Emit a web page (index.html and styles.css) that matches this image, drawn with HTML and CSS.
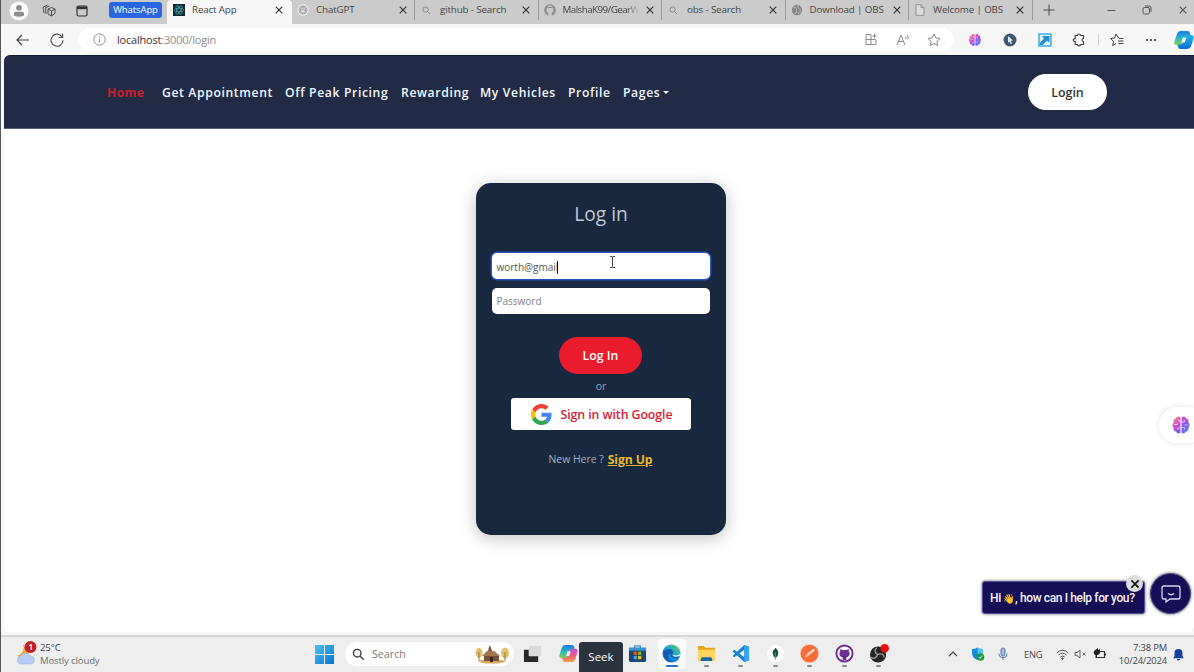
FILE: index.html
```html
<!DOCTYPE html>
<html lang="en">
<head>
<meta charset="utf-8">
<title>React App</title>
<link rel="stylesheet" href="styles.css">
</head>
<body>
<svg class="defs" width="0" height="0">
  <defs>
    <linearGradient id="gBrain" x1="0" y1="0" x2="1" y2="1"><stop offset="0" stop-color="#ff9a4a"/><stop offset=".35" stop-color="#d64fd0"/><stop offset=".65" stop-color="#7b55ee"/><stop offset="1" stop-color="#3f9bff"/></linearGradient>
    <linearGradient id="gWin" x1="0" y1="0" x2="1" y2="1"><stop offset="0" stop-color="#4cc3f3"/><stop offset="1" stop-color="#0873cf"/></linearGradient>
    <linearGradient id="gEdge" x1="0" y1="1" x2="1" y2="0"><stop offset="0" stop-color="#0d60b8"/><stop offset=".5" stop-color="#1b9fd8"/><stop offset="1" stop-color="#62d65c"/></linearGradient>
    <linearGradient id="gCop" x1="0" y1="0" x2="0" y2="1"><stop offset="0" stop-color="#1a7bea"/><stop offset=".5" stop-color="#25b9c4"/><stop offset="1" stop-color="#8ed04a"/></linearGradient>
    <linearGradient id="gCop2" x1="0" y1="0" x2="0" y2="1"><stop offset="0" stop-color="#b45be0"/><stop offset=".5" stop-color="#f0578b"/><stop offset="1" stop-color="#f8a13c"/></linearGradient>
    <linearGradient id="gCop3" x1="0" y1="0" x2="0" y2="1"><stop offset="0" stop-color="#22b8e8"/><stop offset="1" stop-color="#0b6bd8"/></linearGradient>
    <symbol id="close" viewBox="0 0 10 10"><path d="M1.700 1.700l6.600 6.600M8.300 1.700L1.700 8.300" stroke="currentColor" stroke-width="1.200" fill="none"/></symbol>
    <symbol id="search" viewBox="0 0 12 12"><circle cx="4.800" cy="4.800" r="3.500" fill="none" stroke="currentColor" stroke-width="1.200"/><path d="M7.400 7.400l3.400 3.400" stroke="currentColor" stroke-width="1.200" fill="none"/></symbol>
    <symbol id="brain" viewBox="0 0 20 20"><path d="M9.400 2.200C7.500.8 5.200 1.700 4.900 3.600 2.800 3.900 1.900 6 2.700 7.500 1 8.800 1 11.300 2.500 12.400c-.5 2.200.8 3.900 2.600 4.100.7 2 3.100 2.400 4.300 1.200zM10.600 2.200c1.900-1.400 4.200-.5 4.500 1.400 2.100.3 3 2.400 2.200 3.900 1.700 1.300 1.700 3.800.2 4.900.5 2.200-.8 3.900-2.600 4.100-.7 2-3.100 2.400-4.300 1.200z" fill="url(#gBrain)"/><path d="M9.400 6H7.200V4.500M9.400 13H6.800v2M2.800 9.500h3.600V8M10.600 7h2.700V5M10.600 12.500h3v2M17 10h-3.600" stroke="#fff" stroke-width=".9" fill="none" opacity=".7"/></symbol>
  </defs>
</svg>
<div class="screen">
  <header class="tabstrip">
    <div class="strip-tools">
      <svg class="avatar" viewBox="0 0 20 20"><circle cx="10" cy="10" r="9.500" fill="#fbfbfb"/><circle cx="10" cy="6.800" r="2.900" fill="#8d8d8d"/><path d="M5 14.500v-2.300q0-1.500 1.500-1.500h7q1.500 0 1.500 1.500v2.300q-5 2.500-10 0z" fill="#8d8d8d"/></svg>
      <svg width="14" height="14" viewBox="0 0 14 14" fill="none" stroke="#4b4b4b"><path d="M6 5l3.500-1.500L13 5v4.500L9.500 12 6 10zM6 5l3.500 2L13 5M9.500 7v5M4 10L3.500 3.500 7.500 2M2 9L1 3.200 5.500 1"/></svg>
      <svg width="12" height="12" viewBox="0 0 12 12"><rect x="1" y="1" width="10" height="10" rx="1.500" fill="none" stroke="#333" stroke-width="1.200"/><path d="M1 1.500h10v2.700H1z" fill="#333"/></svg>
      <span class="group-pill">WhatsApp</span>
    </div>
    <div class="tab active"><svg class="fav" viewBox="0 0 12 12"><rect width="12" height="12" fill="#10282c"/><g fill="none" stroke="#3f9fa8" stroke-width=".8"><ellipse cx="6" cy="6" rx="4.800" ry="1.900"/><ellipse cx="6" cy="6" rx="4.800" ry="1.900" transform="rotate(60 6 6)"/><ellipse cx="6" cy="6" rx="4.800" ry="1.900" transform="rotate(120 6 6)"/></g></svg><span class="title">React App</span><svg class="x"><use href="#close"/></svg></div>
    <div class="tab first"><svg class="fav" viewBox="0 0 12 12"><circle cx="6" cy="6" r="6" fill="#e2e2e2"/><g fill="none" stroke="#999" stroke-width=".8"><circle cx="6" cy="6" r="4"/><path d="M3.500 4.500L6 3l2.500 1.500v3L6 9 3.500 7.500zM6 2v3l3 2M3 7l3-2"/></g></svg><span class="title">ChatGPT</span><svg class="x"><use href="#close"/></svg></div>
    <div class="tab"><svg class="fav small"><use href="#search"/></svg><span class="title">github - Search</span><svg class="x"><use href="#close"/></svg></div>
    <div class="tab"><svg class="fav" viewBox="0 0 12 12"><path d="M3.700 10.800A5.200 5.200 0 1 1 8.300 10.800V8.900q1.900-.6 1.900-2.700 0-1-.6-1.600V2.900L8 3.500H4l-1.600-.6v1.700q-.6.600-.6 1.600 0 2.100 1.900 2.700z" fill="none" stroke="#8c8c8c" stroke-width="1.200"/></svg><span class="title fade">MalshaK99/GearW</span><svg class="x"><use href="#close"/></svg></div>
    <div class="tab"><svg class="fav small"><use href="#search"/></svg><span class="title">obs - Search</span><svg class="x"><use href="#close"/></svg></div>
    <div class="tab"><svg class="fav" viewBox="0 0 12 12"><circle cx="6" cy="6" r="5.200" fill="#888"/><path d="M2 3l3 1 1 3-2 3M7 1v3l3 2M7 10l1-2 3 0" fill="none" stroke="#b0b0b0"/></svg><span class="title">Download | OBS</span><svg class="x"><use href="#close"/></svg></div>
    <div class="tab"><svg class="fav" viewBox="0 0 12 12"><path d="M2 .7h5l3 3v7.600H2zM7 .7v3h3" fill="#ddd" stroke="#909090"/></svg><span class="title">Welcome | OBS</span><svg class="x"><use href="#close"/></svg></div>
    <div class="window-tools">
      <svg width="12" height="12" viewBox="0 0 12 12"><path d="M6 .5v11M.5 6h11" stroke="#444"/></svg>
      <svg width="9" height="9" viewBox="0 0 9 9"><path d="M.5 4.500h8" stroke="#555"/></svg>
      <svg width="10" height="10" viewBox="0 0 10 10" fill="none" stroke="#555"><rect x="1" y="2.500" width="6.500" height="6.500" rx="1.500"/><path d="M3 1h4q2 0 2 2v4"/></svg>
      <svg width="10" height="10"><use href="#close"/></svg>
    </div>
  </header>

  <div class="toolbar">
    <svg width="14" height="12" viewBox="0 0 14 12" fill="none" stroke="#444" stroke-width="1.200"><path d="M13 6H1M6 1L1 6l5 5"/></svg>
    <svg width="14" height="14" viewBox="0 0 14 14" fill="none" stroke="#555" stroke-width="1.200"><path d="M12.200 4.200A6 6 0 1 0 13 7.300M12.600.8v3.700H8.800"/></svg>
    <div class="address">
      <svg width="13" height="13" viewBox="0 0 13 13" fill="none" stroke="#8d8d8d"><circle cx="6.500" cy="6.500" r="5.700"/><path d="M6.500 5.800v3.700M6.500 3.300v1.200"/></svg>
      <span class="url">localhost<i>:3000/login</i></span>
      <svg width="13" height="13" viewBox="0 0 13 13" fill="none" stroke="#8c8c8c"><path d="M6 1.500H1v10h10V7M1 6.500h10M6 1.500v10M9.500.8v4.400M7.300 3h4.400"/></svg>
      <svg class="read" width="15" height="13" viewBox="0 0 15 13" fill="none" stroke="#8c8c8c"><path d="M1 12L4.800 2.500h.4L9 12M2.500 8.500h5M9.500 3.500q1 1 .3 2.500M11 1.800q2 2 .8 4.700"/></svg>
      <svg width="14" height="14" viewBox="0 0 14 14" fill="none" stroke="#858585"><path d="M7 1l1.800 3.900 4.200.5-3.100 2.900.8 4.200L7 10.500l-3.700 2 .8-4.200L1 5.400l4.200-.5z"/></svg>
    </div>
    <svg width="14" height="14"><use href="#brain"/></svg>
    <svg width="14" height="14" viewBox="0 0 14 14"><circle cx="7" cy="7" r="6.500" fill="#45566e"/><path d="M5 3l5 4.500-2.200.3L9 10.500l-1.500.6-1-2.600L5 9.800z" fill="#dcebf8"/></svg>
    <svg width="14" height="14" viewBox="0 0 14 14"><rect x="1" y="1" width="12" height="12" fill="#dff2fc" stroke="#3caee5" stroke-width="1.500"/><path d="M2 12L2 10 6 5.500 4 3H11.500v6.500L9 7.800 4.500 12z" fill="#238fcf"/></svg>
    <svg width="14" height="14" viewBox="0 0 14 14" fill="none" stroke="#444" stroke-width="1.200"><path d="M4 2.500h1.500c0-2 3-2 3 0h3v3c-2 0-2 3 0 3v3h-3c0 1.700-3 1.700-3 0H3.200v-3C.7 8.700.7 5.500 3.200 5.600V2.500z"/></svg>
    <span class="bar-sep"></span>
    <svg width="14" height="14" viewBox="0 0 14 14" fill="none" stroke="#444"><path d="M8.500 5L6 1 4.500 5l-4 .5 3 2.800-.8 4.200L6 10.500M9 5.500h4.500M8 8h5.500M8.500 10.500h5"/></svg>
    <svg width="12" height="4" viewBox="0 0 12 4" fill="#333"><circle cx="2" cy="2" r="1.100"/><circle cx="6" cy="2" r="1.100"/><circle cx="10" cy="2" r="1.100"/></svg>
    <svg width="20" height="18" viewBox="0 0 20 18"><path d="M6.500 0h7q2 0 2.500 2l.6 2.500h-3q-2 0-2.600 2L9.300 12q-.6 2-2.600 2H3Q-.5 14 .5 10.500L3 2.800Q4 0 6.500 0z" fill="url(#gCop)"/><path d="M13.500 18h-7q-2 0-2.500-2l-.6-2.500h3q2 0 2.600-2L10.700 6q.6-2 2.600-2H17q3.500 0 2.500 3.500L17 15.200Q16 18 13.500 18z" fill="url(#gCop3)"/><path d="M8.800 6.500h3.400L10.800 11.500H7.400z" fill="#f7f7f8"/></svg>
  </div>

  <main class="page">
    <nav class="navbar">
      <a class="n-home">Home</a><a class="n-get">Get Appointment</a><a class="n-off">Off Peak Pricing</a><a class="n-rew">Rewarding</a><a class="n-veh">My Vehicles</a><a class="n-pro">Profile</a><a class="n-pag">Pages</a><span class="caret"></span>
      <button class="nav-login">Login</button>
    </nav>
    <form class="card">
      <h1>Log in</h1>
      <div class="field focus"><span>worth@gmail</span><b class="text-caret"></b></div>
      <div class="field"><span class="placeholder">Password</span></div>
      <div class="submit">Log In</div>
      <div class="or">or</div>
      <div class="google"><svg width="21" height="21" viewBox="0 0 48 48"><path fill="#ea4335" d="M24 9.500c3.500 0 6.700 1.200 9.200 3.600l6.900-6.900C35.900 2.400 30.500 0 24 0 14.600 0 6.500 5.400 2.600 13.200l8 6.200C12.400 13.700 17.700 9.500 24 9.500z"/><path fill="#4285f4" d="M47 24.500c0-1.600-.2-3.100-.4-4.500H24v9h12.900c-.6 3-2.300 5.500-4.800 7.200l7.700 6C44.400 38 47 31.800 47 24.500z"/><path fill="#fbbc05" d="M10.500 28.600a14.500 14.500 0 0 1 0-9.200l-8-6.200a24 24 0 0 0 0 21.600z"/><path fill="#34a853" d="M24 48c6.500 0 11.900-2.100 15.900-5.800l-7.700-6c-2.200 1.500-5 2.300-8.200 2.300-6.300 0-11.600-4.200-13.500-9.900l-8 6.200C6.500 42.600 14.600 48 24 48z"/></svg><span>Sign in with Google</span></div>
      <div class="signup"><span>New Here ?</span><a>Sign Up</a></div>
    </form>
  </main>

  <footer class="taskbar">
    <div class="weather">
      <svg width="24" height="26" viewBox="0 0 24 26"><path d="M8 3Q11 11 2 15q8 3 12-3z" fill="#f6a724"/><path d="M5 23a4.200 4.200 0 0 1 .5-8 5.500 5.500 0 0 1 9.500-.3A4.200 4.200 0 0 1 16 23z" fill="#b5cdf3" stroke="#92b1e3" stroke-width=".6"/><circle cx="15.500" cy="6" r="6" fill="#c01f22"/><text x="13.200" y="9.300" class="badge-num">1</text></svg>
      <div class="weather-text"><span>25°C</span><em>Mostly cloudy</em></div>
    </div>
    <svg class="start" viewBox="0 0 19 19" fill="url(#gWin)"><path d="M0 0h9v9H0zM10 0h9v9h-9zM0 10h9v9H0zM10 10h9v9h-9z"/></svg>
    <div class="searchbox">
      <svg width="13" height="13"><use href="#search"/></svg><span>Search</span>
      <svg width="34" height="20" viewBox="0 0 34 20"><ellipse cx="17" cy="17.500" rx="13" ry="2" fill="#d5ac55"/><ellipse cx="4" cy="9" rx="3.500" ry="5" fill="#e0c06b"/><ellipse cx="30" cy="9" rx="4" ry="5.500" fill="#e0c06b"/><path d="M4 8v9M30 8v9" stroke="#9b7439"/><path d="M9 11l4-4 1-4 1-2 1 3 1 3 7 4v6H9z" fill="#7a5137"/><path d="M7 12l5-5h7l6 5z" fill="#a17750"/><path d="M15 13h3v5h-3z" fill="#3b2721"/></svg>
    </div>
    <div class="apps">
      <div class="app"><svg viewBox="0 0 20 20"><path d="M6 2h13v11H6z" fill="#d9d9d9"/><path d="M1 6h5v7h10v6H1z" fill="#292929"/></svg></div>
      <div class="app"><svg viewBox="0 0 20 18"><path d="M6.500 0h7q2 0 2.500 2l.6 2.500h-3q-2 0-2.600 2L9.300 12q-.6 2-2.600 2H3Q-.5 14 .5 10.500L3 2.800Q4 0 6.500 0z" fill="url(#gCop)"/><path d="M13.500 18h-7q-2 0-2.500-2l-.6-2.500h3q2 0 2.600-2L10.700 6q.6-2 2.600-2H17q3.500 0 2.500 3.500L17 15.200Q16 18 13.500 18z" fill="url(#gCop2)"/><path d="M8.800 6.500h3.400L10.800 11.500H7.400z" fill="#eee"/></svg></div>
      <div class="app skip"><svg viewBox="0 0 20 20"><path d="M7 5V2h6v3" fill="none" stroke="#3f9de0" stroke-width="1.500"/><path d="M1 4h18v13q0 2-2 2H3q-2 0-2-2z" fill="#1d466f"/><path d="M1 4h18v3H1z" fill="#3b91d2"/><path d="M6 8h3.500v3.500H6z" fill="#f25022"/><path d="M10.500 8H14v3.500h-3.500z" fill="#7fba00"/><path d="M6 12.500h3.500V16H6z" fill="#36a7ed"/><path d="M10.500 12.500H14V16h-3.500z" fill="#ffb900"/></svg></div>
      <div class="app current"><svg viewBox="0 0 20 20"><circle cx="10" cy="10" r="9.500" fill="url(#gEdge)"/><path d="M1 9c3-5 10-5 11-.5.300 1.500-2 2-1 3.700 1.200 2 5 1.800 7.500 0C16 20 5 21 2 13z" fill="#105db0"/><path d="M8 9.500c-3 3-1 8 4 9.500 3-.5 5-2 6-5-4 2-9 0-9-3z" fill="#1686d8"/><path d="M11 11.500q1 3 8 1v-2q-1 1.500-4 1.500-2 0-4-.5z" fill="#eef8fb"/></svg></div>
      <div class="app open"><svg viewBox="0 0 20 20"><path d="M1 2h6l2 2h10v14H1z" fill="#e3a51b"/><path d="M1 6h18v12H1z" fill="#ffd45a"/><path d="M4 18v-2q0-2 2-2h8q2 0 2 2v2z" fill="#1767a9"/></svg></div>
      <div class="app open"><svg viewBox="0 0 20 20"><path d="M14 1l5 2v14l-5 2L1.500 7.500 3.500 6 14 14V6L3.500 14l-2-1.500z" fill="#1685ce"/><path d="M14 1l5 2v14l-5 2z" fill="#35a6eb"/></svg></div>
      <div class="app open"><svg viewBox="0 0 20 20"><circle cx="10" cy="10" r="9" fill="#fff"/><path d="M10 4q6 6 0 11-6-5 0-11z" fill="#11533c"/><path d="M10 9v8" stroke="#6e9d7d" stroke-width=".7"/></svg></div>
      <div class="app open"><svg viewBox="0 0 20 20"><circle cx="10" cy="10" r="9.500" fill="#ff6c37"/><path d="M5 15l3-5 5-4 2-1 .5 1.500-2 2L9 12z" fill="#fff"/><path d="M6 14l7-7" stroke="#ff6c37" stroke-width=".6"/></svg></div>
      <div class="app open"><svg viewBox="0 0 20 20"><circle cx="10" cy="10" r="8.500" fill="#fff" stroke="#6b2f91" stroke-width="2"/><path d="M8 17v-3C4 13 4 9 5.500 7.500V5l2 1.200h5l2-1.200v2.500C16 9 16 13 12 14v3z" fill="#6b2f91"/></svg></div>
      <div class="app open"><svg class="obs" viewBox="0 0 22 20"><circle cx="9.500" cy="11" r="8.500" fill="#242424"/><path d="M8 4q-4 4 1 7M9 11q6-2 7 3M9 11q-2 6-7 3" stroke="#999" stroke-width="1.500" fill="none"/><circle cx="16.500" cy="4.500" r="4.500" fill="#f00b0b"/></svg></div>
    </div>
    <div class="tray">
      <svg width="10" height="8" viewBox="0 0 10 8"><path d="M1 6l4-4 4 4" fill="none" stroke="#444" stroke-width="1.200"/></svg>
      <svg width="14" height="14" viewBox="0 0 14 14"><path d="M1 2q4 0 5.500-1.500Q8 2 12 2v4q0 5-5.500 7Q1 11 1 6z" fill="#1687d9"/><path d="M6.500.5Q8 2 12 2v5H6.500z" fill="#55c3f0"/><circle cx="9.500" cy="10" r="3.800" fill="#199b3b"/><path d="M7.700 10l1.300 1.400 2.400-2.800" stroke="#fff" fill="none"/></svg>
      <svg width="10" height="14" viewBox="0 0 10 14" fill="none"><rect x="3" y="1" width="4" height="8" rx="2" fill="#a7bfe0" stroke="#5577a7"/><path d="M1 6.500v1q0 3 4 3t4-3v-1M5 10.500V13" stroke="#5577a7"/></svg>
      <span class="lang">ENG</span>
      <svg width="13" height="11" viewBox="0 0 13 11" fill="none" stroke="#555"><path d="M.7 4q5.800-5.500 11.600 0M2.500 6q4-3.700 8 0M4.300 8q2.200-2 4.400 0"/><circle cx="6.500" cy="9.500" r=".7" fill="#555"/></svg>
      <svg width="13" height="10" viewBox="0 0 13 10" fill="none" stroke="#666"><path d="M1 3.500h2L6 1v8L3 6.500H1zM8.500 3.500l3 3M11.500 3.500l-3 3"/></svg>
      <svg width="14" height="12" viewBox="0 0 14 12"><path d="M6 3.500h5.500v6H3.500M12.500 5.500v2" fill="none" stroke="#333" stroke-width="1.200"/><path d="M3 1.500L5 0v2l2-1v3q0 3-3 3v3H2.500V7Q0 6.500 1 3z" fill="#222"/></svg>
      <div class="clock"><span>7:38 PM</span><span>10/24/2024</span></div>
      <svg width="11" height="13" viewBox="0 0 11 13" fill="#163f9e"><path d="M1.500 5a4 4 0 0 1 8 0v3l1.300 2.200H.2L1.500 8zM3.800 11h3.400q-.3 1.500-1.700 1.500T3.800 11z"/></svg>
    </div>
  </footer>

  <svg class="mouse" viewBox="0 0 7 12"><path d="M1 .5h2l.5.500.5-.5h2M3.500 1v10M1 11.500h2l.5-.5.500.5h2" fill="none" stroke="#444"/></svg>
  <div class="side-tab"><svg width="20" height="20"><use href="#brain"/></svg></div>
  <div class="chat-tip">Hi <span class="wave">👋</span>, how can I help for you?</div>
  <div class="chat-close"><svg width="12" height="12" viewBox="0 0 10 10"><path d="M2 2l6 6M8 2L2 8" stroke="#111" stroke-width="1.500"/></svg></div>
  <div class="chat-button"><svg width="20" height="20" viewBox="0 0 20 20" fill="none" stroke="#d8d5f5" stroke-width="1.300"><path d="M3 2h14q2 0 2 2v9q0 2-2 2H9l-4 3v-3H3q-2 0-2-2V4q0-2 2-2zM7 9.500q3 2.500 6 0"/></svg></div>
  <div class="seek">Seek</div>
</div>
</body>
</html>
```

FILE: styles.css
```css
* { box-sizing: border-box; }
body { margin: 0; font-family: "Open Sans", "Noto Sans", sans-serif; }
svg { display: block; flex: none; }
.defs { position: absolute; }
.screen { position: relative; width: 1194px; height: 672px; overflow: hidden; display: flex; flex-direction: column; background: #f7f7f8; border-left: 1px solid #55565a; }

/* Browser tabs */
.tabstrip { height: 24px; flex: none; display: flex; background: #cbcbcb; }
.strip-tools { width: 166px; height: 21px; display: grid; grid-template-columns: 36px 24px 42px 6px 53px; align-items: center; justify-items: center; }
.avatar { width: 20px; height: 20px; }
.group-pill { grid-column: 5; width: 53px; height: 16px; margin-top: -1px; border-radius: 3px; background: #2866df; color: #fff; font-size: 9.500px; line-height: 16px; text-align: center; letter-spacing: -.1px; }
.tab { width: 123.500px; height: 20px; flex: none; display: flex; align-items: center; padding-left: 5px; border-right: 1px solid #999; }
.tab.active { width: 124.500px; height: 24px; padding: 0 0 4px 6px; background: #f7f7f8; border: 0; border-radius: 4px 4px 0 0; }
.tab.first { padding-left: 5.500px; }
.fav { width: 12px; height: 12px; margin-right: 7px; color: #858585; }
.fav.small { width: 9px; height: 9px; margin: 0 9.500px 0 1.500px; }
.fav.small + .title { width: 75px; }
.title { width: 76px; margin-right: 6px; font-size: 9.800px; line-height: 14px; letter-spacing: -.15px; color: #444; white-space: nowrap; }
.title.fade { letter-spacing: -.55px; mask-image: linear-gradient(90deg, #000 84%, transparent); }
.x { width: 10px; height: 10px; color: #333; }
.window-tools { flex: 1; height: 20px; display: flex; align-items: center; padding-left: 10px; }
.window-tools svg:nth-child(2) { margin-left: 52px; }
.window-tools svg:nth-child(n+3) { margin-left: 26px; color: #555; }

/* Address row */
.toolbar { height: 31px; flex: none; display: grid; grid-template-columns: 43px 26px 9px 874px 44px 26px 43px 26px 12px 26px 42px 23px; align-items: center; justify-items: center; background: #f7f7f8; }
.address { grid-column: 4; width: 874px; height: 23px; border-radius: 12px; background: #fff; display: flex; align-items: center; padding-left: 14px; }
.url { width: 742px; margin: 0 6px 1px 11px; font-size: 11px; color: #3d3033; letter-spacing: -.2px; }
.url i { font-style: normal; color: #8c8c8c; }
.read { margin: 0 16px 0 18px; }
.bar-sep { width: 1px; height: 11px; background: #d4d4d8; }

/* Web page */
.page { flex: none; height: 577px; margin-left: 3px; background: #fff; display: flex; flex-direction: column; align-items: center; border-radius: 6px 0 6px 6px; }
.navbar { width: 100%; height: 74px; padding-left: 103px; display: flex; align-items: center; flex: none; background: #212b45; border-top: 1px solid #141b30; border-bottom: 1px solid #566078; border-radius: 6px 0 0 0; color: #f3f7fe; font-size: 12.200px; font-weight: 600; }
.navbar a { flex: none; white-space: nowrap; letter-spacing: .62px; padding-top: 1px; }
.navbar .n-home { width: 55px; color: #c8202f; font-weight: 700; letter-spacing: .3px; }
.n-get { width: 123px; }
.n-off { width: 116px; }
.n-rew { width: 79px; }
.n-veh { width: 88px; }
.n-pro { width: 55px; }
.n-pag { width: 40px; }
.caret { border: 3.500px solid transparent; border-top-color: #f3f7fe; border-bottom: 0; }
.nav-login { width: 79px; height: 36px; margin-left: 359px; border: 0; border-radius: 18px; background: #fff; color: #333; font: 600 12.400px "Open Sans", sans-serif; }
.card { width: 250px; height: 352px; margin: 54px 0 0 3px; padding: 17px 16px 0; display: flex; flex-direction: column; align-items: center; background: #17283f; border-radius: 15px; box-shadow: 0 3px 18px rgba(0,0,0,.24); color: #c0c9d0; }
.card h1 { margin: 0 0 25px 1px; font-size: 19.200px; line-height: 28px; font-weight: 400; }
.field { width: 218px; height: 26px; margin-bottom: 9px; padding-left: 5px; display: flex; align-items: center; flex: none; background: #fff; border-radius: 5px; color: #555; font-size: 10px; }
.field.focus { box-shadow: 0 0 0 1.500px #2752b7; padding-top: 2px; }
.placeholder { color: #7b8086; }
.text-caret { width: 1px; height: 13px; margin-left: -1px; background: #111; }
.submit { width: 83px; height: 37px; margin-top: 14px; border-radius: 19px; background: #ea1b2d; color: #fff; font-size: 12.300px; font-weight: 600; line-height: 38px; text-align: center; }
.or { height: 24px; line-height: 25px; font-size: 10.500px; color: #9ca7b4; padding-left: 1px; }
.google { width: 180px; height: 32px; border-radius: 3px; background: #fff; display: flex; align-items: center; padding-left: 20px; gap: 9px; color: #d71d36; font-size: 12.400px; font-weight: 600; letter-spacing: -.1px; white-space: nowrap; }
.signup { display: flex; align-items: center; gap: 4px; margin-top: 20px; height: 18px; font-size: 10.400px; color: #a7b2be; }
.signup a { color: #e8b928; font-size: 12.200px; font-weight: 700; text-decoration: underline; letter-spacing: -.1px; }

/* Taskbar */
.taskbar { height: 37px; flex: none; margin-top: 3px; padding-bottom: 1px; display: flex; align-items: center; background: #eee; border-top: 2px solid #d6d6d6; color: #444; }
.weather { width: 314px; display: flex; padding-left: 14px; gap: 1px; }
.badge-num { font: 600 9px "Open Sans", sans-serif; fill: #fff; }
.weather-text { display: flex; flex-direction: column; font-size: 9.600px; line-height: 13px; color: #444; letter-spacing: -.15px; }
.weather-text em { font-style: normal; color: #707070; }
.start { width: 19px; height: 19px; }
.searchbox { width: 169px; height: 24px; margin-left: 11px; border-radius: 12px; background: #fff; display: flex; align-items: center; padding-left: 7px; color: #333; flex: none; }
.searchbox span { width: 97px; margin-left: 7px; font-size: 10.700px; color: #777; }
.searchbox svg:last-child { margin-left: 6px; }
.apps { width: 379px; height: 34px; display: grid; grid-template-columns: 36px 36px 34px repeat(8, 34.500px); align-items: center; flex: none; }
.app.skip { grid-column: 4; }
.app { width: 28px; height: 30px; justify-self: center; display: flex; flex-direction: column; align-items: center; padding-top: 5px; border-radius: 3px; }
.app svg { width: 19px; height: 19px; }
.app .obs { width: 21px; margin-left: 2px; }
.app.open::after { content: ""; width: 5px; height: 2px; margin-top: 2px; border-radius: 1px; background: #888; }
.app.current { background: #fafafa; }
.app.current::after { content: ""; width: 12px; height: 2px; margin-top: 2px; border-radius: 1px; background: #1d75c9; }
.tray { flex: 1; display: flex; align-items: center; padding-left: 55px; }
.tray svg:nth-child(2) { margin-left: 13px; }
.tray svg:nth-child(3) { margin-left: 13px; }
.lang { width: 20px; margin: 0 12px 0 16px; font-size: 9.300px; letter-spacing: -.2px; }
.tray svg:nth-child(6) { margin: 0 6px 0 5px; }
.clock { width: 60px; display: flex; flex-direction: column; text-align: right; font-size: 9.400px; line-height: 13px; letter-spacing: -.15px; margin-right: 6px; }

/* Layers over the page */
.mouse { position: absolute; left: 608px; top: 256px; width: 7px; height: 12px; }
.side-tab { position: absolute; left: 1158px; top: 407px; width: 48px; height: 36px; padding: 8px 12px; border-radius: 18px; background: #fff; box-shadow: 0 0 6px rgba(0,0,0,.12); }
.chat-tip { position: absolute; left: 981px; top: 581px; width: 163px; height: 33px; padding-left: 7px; border: 1px solid #555099; border-radius: 3px; background: #170f56; box-shadow: 0 0 3px #555; color: #f5f4fc; font: 500 12px/32px Roboto, sans-serif; letter-spacing: -.38px; white-space: nowrap; }
.wave { font-size: 9.500px; }
.chat-close { position: absolute; left: 1125px; top: 575px; width: 17px; height: 17px; border-radius: 50%; background: #ddd; display: grid; place-items: center; }
.chat-button { position: absolute; left: 1149px; top: 573px; width: 41px; height: 41px; border-radius: 50%; border: 1px solid #55518b; background: #170f56; box-shadow: 0 0 3px #555; display: grid; place-items: center; }
.seek { position: absolute; left: 578px; top: 642px; width: 44px; height: 30px; border-radius: 3px 3px 0 0; background: #2b333e; color: #fff; font-size: 11.500px; line-height: 30px; text-align: center; }
```
